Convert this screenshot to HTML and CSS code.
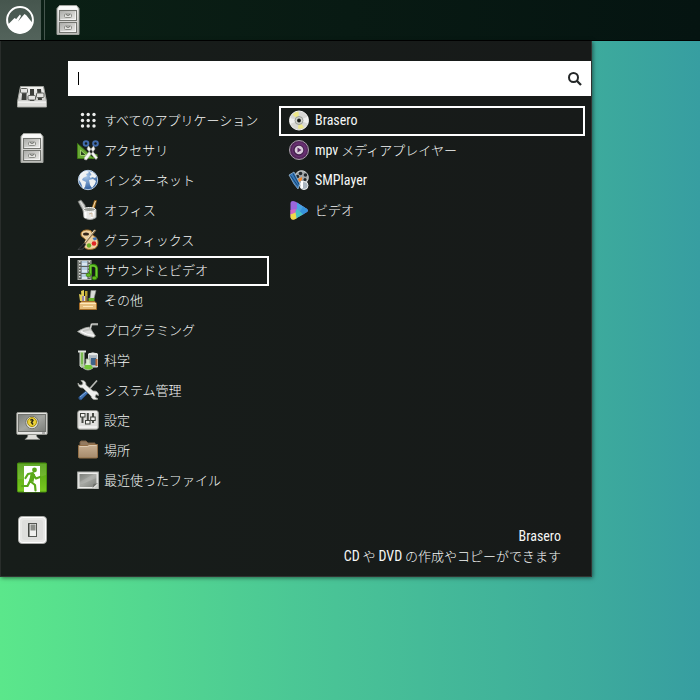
FILE: index.html
```html
<!DOCTYPE html>
<html lang="ja">
<head>
<meta charset="utf-8">
<meta name="viewport" content="width=device-width, initial-scale=1">
<title>メニュー</title>
<link rel="stylesheet" href="styles.css">
</head>
<body>
<svg class="defs" aria-hidden="true">
  <defs>
    <linearGradient id="metal" x1="0" y1="0" x2="0" y2="1"><stop offset="0" stop-color="#f6f6f4"/><stop offset="1" stop-color="#babbb7"/></linearGradient>
    <linearGradient id="drawer" x1="0" y1="0" x2="1" y2="1"><stop offset="0" stop-color="#a9aaa6"/><stop offset="1" stop-color="#eeeeec"/></linearGradient>
    <linearGradient id="green" x1="0" y1="0" x2="0" y2="1"><stop offset="0" stop-color="#4f9c12"/><stop offset="1" stop-color="#79c91f"/></linearGradient>
    <linearGradient id="folder" x1="0" y1="0" x2="0" y2="1"><stop offset="0" stop-color="#c9b092"/><stop offset="1" stop-color="#a58a6b"/></linearGradient>
    <linearGradient id="screen" x1="0" y1="0" x2="1" y2="1"><stop offset="0" stop-color="#7d807b"/><stop offset=".5" stop-color="#a4a6a1"/><stop offset="1" stop-color="#7b7e79"/></linearGradient>
    <radialGradient id="globe" cx=".4" cy=".3" r=".7"><stop offset="0" stop-color="#a9c8ea"/><stop offset="1" stop-color="#315f9e"/></radialGradient>
    <symbol id="cabinet" viewBox="0 0 32 32">
      <path d="M7.500 1.500h17l2.500 3v26H5v-26z" fill="url(#metal)" stroke="#a2a49f"/>
      <path d="M7.500 2.500h17l1.500 3H6z" fill="#fafaf9"/>
      <rect x="7.500" y="6.500" width="17" height="10" fill="url(#drawer)" stroke="#72746f"/>
      <rect x="7.500" y="18.500" width="17" height="10" fill="url(#drawer)" stroke="#72746f"/>
      <path d="M8.500 15.500h15v-8M8.500 27.500h15v-8" fill="none" stroke="#fff" opacity=".6"/>
      <rect x="12.500" y="10" width="7" height="3.500" rx="1" fill="#e4e4e1" stroke="#8c8e89"/><rect x="12.500" y="22" width="7" height="3.500" rx="1" fill="#e4e4e1" stroke="#8c8e89"/>
      <path d="M14 10.500q2 2 4 0M14 22.500q2 2 4 0" fill="none" stroke="#6a6c68"/>
    </symbol>
  </defs>
</svg>

<header class="panel">
  <button class="panel-menu" type="button" aria-label="メニュー">
    <svg class="icon-start" viewBox="0 0 32 32"><circle cx="16" cy="16" r="12.900" fill="none" stroke="#fff" stroke-width="2"/><path d="M4 20.500l6.500-6.500 1.700 1 3.800-4.500 1 1.500-3 5.500 6.500-7.500 1.800 1.200L28.500 19A13 13 0 0 1 4 22z" fill="#fff"/></svg>
  </button>
  <button class="panel-files" type="button" aria-label="ファイル"><svg class="icon-large"><use href="#cabinet"/></svg></button>
</header>

<main class="menu">
  <aside class="favorites">
    <button type="button" aria-label="システム設定"><svg class="icon-large" viewBox="0 0 32 32">
      <path d="M4.500 6.500h23l3 15v5.500h-29v-5.500z" fill="url(#metal)" stroke="#a2a49f"/><path d="M2 22h28v4.500H2z" fill="#dededb"/><path d="M2 22h28" stroke="#fff"/>
      <path d="M6.500 9h4v11h-5zM14 9h4v12h-4zM21 9h4l1 11h-4z" fill="#3c3e3a"/>
      <rect x="4.500" y="8.500" width="7" height="4.500" rx="1" fill="#e4e4e1" stroke="#5f615c"/><rect x="12" y="15.500" width="7.500" height="4.500" rx="1" fill="#e4e4e1" stroke="#5f615c"/><rect x="20.500" y="13" width="7.500" height="4.500" rx="1" fill="#e4e4e1" stroke="#5f615c"/>
      </svg></button>
    <button type="button" aria-label="ファイル"><svg class="icon-large"><use href="#cabinet"/></svg></button>
    <span class="spacer"></span>
    <button type="button" aria-label="画面をロック"><svg class="icon-large" viewBox="0 0 32 32">
      <path d="M12 24h8l1 3 3 2.500H9l2.500-2.500z" fill="#deded9" stroke="#888a85" stroke-width=".6"/>
      <rect x=".8" y="2.500" width="30.400" height="22" rx="1" fill="#e5e5e2" stroke="#93958f"/><rect x="2.500" y="4.500" width="27" height="17" fill="url(#screen)" stroke="#70726d"/>
      <circle cx="16" cy="12.500" r="6.300" fill="#d9dad5" stroke="#73756f"/><circle cx="16" cy="12" r="4.500" fill="#edd43a" stroke="#a68b08"/><path d="M14.500 10.500q1.500-2 2.500 0l-1.500 2 1.500 2" fill="none" stroke="#302b16" stroke-width="1.500"/><path d="M26 23h3" stroke="#777"/></svg></button>
    <button type="button" aria-label="ログアウト"><svg class="icon-large" viewBox="0 0 32 32">
      <rect x="1.500" y="1" width="29" height="29" rx="1" fill="url(#green)" stroke="#4b9211"/><path d="M8 4h16v26H8z" fill="#fff"/><path d="M2 2h28v11Q17 18 2 17z" fill="#fff" opacity=".1"/>
      <circle cx="18.500" cy="8" r="2.400" fill="#58a51a"/><path d="M17 11l-5 1-2.500 4M17 12.500l3 4 4-1.500M16 12l-2 7 5 4 .5 5.500M14 19l-2.500 5H6" fill="none" stroke="#5aa91a" stroke-width="2.200" stroke-linecap="round" stroke-linejoin="round"/><path d="M15 11l4 1-1.500 8-4-1z" fill="#5aa91a"/></svg></button>
    <button type="button" aria-label="シャットダウン"><svg class="icon-large" viewBox="0 0 32 32">
      <rect x="2.500" y="2.500" width="28" height="27" rx="3.500" fill="#e7e7e5" stroke="#a9aaa7"/><rect x="3.500" y="3.500" width="26" height="25" rx="3" fill="none" stroke="#fff"/><rect x="6" y="6" width="21" height="20" rx="2" fill="#dededc"/>
      <rect x="12.500" y="9.500" width="8" height="13" fill="#f0f0ee" stroke="#555753"/><path d="M14.500 10.500h5v6h-5z" fill="#8b8d88"/><path d="M13 10v12" stroke="#31332f"/></svg></button>
  </aside>

  <section class="content">
    <div class="search">
      <span class="caret"></span>
      <input type="text" aria-label="検索" autocomplete="off">
      <svg class="icon-search" viewBox="0 0 16 16"><circle cx="6.500" cy="6.500" r="4.500" fill="none" stroke="#232627" stroke-width="2"/><path d="M9.800 9.800L14 14" stroke="#232627" stroke-width="2.300"/></svg>
    </div>

    <div class="columns">
      <nav class="list categories" aria-label="カテゴリ">
        <button class="row" type="button"><svg viewBox="0 0 22 22"><g fill="#eceeed"><circle cx="5.500" cy="5.500" r="1.700"/><circle cx="11.200" cy="5.500" r="1.700"/><circle cx="17" cy="5.500" r="1.700"/><circle cx="5.500" cy="11.500" r="1.700"/><circle cx="11.200" cy="11.500" r="1.700"/><circle cx="17" cy="11.500" r="1.700"/><circle cx="5.500" cy="17" r="1.700"/><circle cx="11.200" cy="17" r="1.700"/><circle cx="17" cy="17" r="1.700"/></g></svg>すべてのアプリケーション</button>
        <button class="row" type="button"><svg viewBox="0 0 22 22"><path d="M.5 4.500L17 19.500H.5z" fill="#68a835" stroke="#3e7914"/><path d="M3.500 11v5.500h6z" fill="#28411d" stroke="#a1d06e"/><path d="M15 19.500h5.500v-4l-3-1z" fill="#5a9a2b"/><circle cx="9" cy="4.500" r="2.300" fill="none" stroke="#426cad" stroke-width="2"/><circle cx="18.500" cy="4.500" r="2.300" fill="none" stroke="#426cad" stroke-width="2"/><path d="M11.500 7L20.500 18.500l-1.500 2L10 10zM16.500 7L7.500 18.500v2l2 .5 8.500-11z" fill="#f5f5f4" stroke="#b5b8b2" stroke-width=".6"/></svg>アクセサリ</button>
        <button class="row" type="button"><svg viewBox="0 0 22 22"><circle cx="11" cy="11" r="9.700" fill="url(#globe)" stroke="#b9cee4"/><path d="M2.500 7Q5 2 10 2l2 2-3 1 1 2-4 2-1 2 4 2-1 5-2 2-2-6-2-3zM13 3q5 0 6.500 5l-2 1-2-1-2 1-1-2 2-1zM12 11l4-1 3 2-1 3-3 4-2-3z" fill="#eef1f2"/><path d="M3 6Q9 0 16 4" stroke="#fff" fill="none" opacity=".6"/></svg>インターネット</button>
        <button class="row" type="button"><svg viewBox="0 0 22 22"><path d="M1 2.500l3-1.500L8 6l1 6-2 1-3-5z" fill="#bfc1bd" stroke="#6d706b" stroke-width=".7"/><path d="M17.500 1.500h2L17 11l-3 1z" fill="#d59a3c" stroke="#8d5b12" stroke-width=".7"/><path d="M3.500 2.500l5 9M14.500 12l4-10" stroke="#fff" opacity=".6"/><path d="M6 10.500h13v8q-6 4-12 0z" fill="#e9e9e7" stroke="#a4a6a2"/><ellipse cx="12.500" cy="10.500" rx="6" ry="2" fill="#999c95" stroke="#f5f5f4"/><path d="M8.500 13v6M16.500 13l-2 6" stroke="#fff" stroke-width="2"/><path d="M12 15l3-1v4" fill="none" stroke="#ceb89e"/></svg>オフィス</button>
        <button class="row" type="button"><svg viewBox="0 0 22 22"><path d="M4 5C4 1 11 0 14 2c2 2 0 4 3 5 6 3 5 12-1 13-5 1-9 0-9-4 0-3 3-4 1-6C6 8 4 8 4 5z" fill="#efd1a0" stroke="#ad762c"/><ellipse cx="9" cy="5" rx="3" ry="1.600" fill="#33251b"/><circle cx="12" cy="16.500" r="2.200" fill="#65ad25"/><circle cx="17" cy="14.500" r="2.300" fill="#df2626"/><path d="M15.500 9l3.500-1 1 2.500-3 1z" fill="#4375b8"/><path d="M18.500 .8L8 14" stroke="#8e7550" stroke-width="2"/><path d="M17.500 1L8 13" stroke="#f0e3c7"/><path d="M7 14l2 1-3 5-5 .5 4-4z" fill="#17191a" stroke="#595c5e" stroke-width=".6"/></svg>グラフィックス</button>
        <button class="row selected" type="button" aria-pressed="true"><svg viewBox="0 0 22 22"><rect x="1" y="1.500" width="13" height="19" fill="#5b5e59" stroke="#a8aaa5"/><path d="M2.800 2v18M12.200 2v18" stroke="#e1e2df" stroke-width="1.500" stroke-dasharray="1.500 1.500"/><path d="M4.500 2h6v5h-6zM4.500 8h6v6h-6zM4.500 15h6v5h-6z" fill="#b7cde1"/><path d="M5 5h5M5 12h5M5 19h5" stroke="#fff"/><path d="M13.500 16V7q5-2 6 2v10" fill="none" stroke="#348c0b" stroke-width="3"/><path d="M13.500 16V7q5-1 6 2v9" fill="none" stroke="#71c832" stroke-width="1.500"/><ellipse cx="11.500" cy="16" rx="2.500" ry="1.700" fill="#62b91d" stroke="#32800b" stroke-width=".7"/><ellipse cx="17.500" cy="19" rx="2.500" ry="1.700" fill="#62b91d" stroke="#32800b" stroke-width=".7"/></svg>サウンドとビデオ</button>
        <button class="row" type="button"><svg viewBox="0 0 22 22"><path d="M4 2l3-1v11H5zM2 5l3 1v6H3z" fill="#e4cf58"/><path d="M5 7h3v6H5z" fill="#ddd6e5"/><path d="M8 2h2.500v10H8z" fill="#bca330"/><path d="M14 1.500h5l-2 8h-4z" fill="#d9dcd8" stroke="#8b8e89" stroke-width=".6"/><path d="M11.500 9h6v3.500h-6z" fill="#69b52a"/><path d="M6 7v6M10 7v6" stroke="#50365f"/><path d="M2.500 14l2-1.500h13l2 1.500v6.500h-17z" fill="#e6bd7b" stroke="#a66d27"/><path d="M3 14.500h16M6 17.500h10" stroke="#ffe7b8"/></svg>その他</button>
        <button class="row" type="button"><svg viewBox="0 0 22 22"><path d="M.5 12.500q7-4.500 12-4.500l6 9-2 1.500Q7 17.500.5 12.500z" fill="#dfe0de" stroke="#9b9e98" stroke-width=".7"/><path d="M13 11L14.500 5.500H21" fill="none" stroke="#7f827d" stroke-width="2"/><path d="M13 11L14.500 5H21" fill="none" stroke="#e2e2e0"/><path d="M4 12.500q7 4 13 4" stroke="#fff" fill="none"/><path d="M6 12l8-2" stroke="#c3c5c1" stroke-width="2"/></svg>プログラミング</button>
        <button class="row" type="button"><svg viewBox="0 0 22 22"><path d="M1 2.500h8" stroke="#dfe3de" stroke-width="2"/><path d="M3 3v14q2 3 4 0V3" fill="#a5ce87" stroke="#cfd3ce"/><path d="M4 4h2v11H4z" fill="#79b950"/><path d="M11.500 5q4-2 9 0v13h-9z" fill="#aeb7be" stroke="#e0e1df"/><ellipse cx="16" cy="5" rx="4.500" ry="1.300" fill="#e6e8e6"/><path d="M14 9h5v7h-5z" fill="#3e6288"/><path d="M19.500 10v7" stroke="#b56634" stroke-width="2"/><path d="M9 10h4v4l3 5q-5 4-10 0l3-5z" fill="#dcecd1" stroke="#9fa59a" stroke-width=".8"/><path d="M8 16h6l2 3q-5 3-9 0z" fill="#74c639"/></svg>科学</button>
        <button class="row" type="button"><svg viewBox="0 0 22 22"><path d="M20 1.500L9 14" stroke="#b8bab6" stroke-width="1.700"/><path d="M9 12l2 2-7 7q-3-1-2-3z" fill="#3f70af" stroke="#284c7c"/><path d="M3 18l6-5" stroke="#83afe2"/><path d="M4 1.500L6 4 5 6 2.500 6 1 4q0 5 5 5l8 8q1 5 7 3l-3-2 1-2.500 2.500 1q0-5-5.500-4.500L9 6q0-5-5-4.500z" fill="#eeefed" stroke="#a3a6a0" stroke-width=".8"/></svg>システム管理</button>
        <button class="row" type="button"><svg viewBox="0 0 22 22"><rect x=".7" y="1.700" width="20.600" height="18.600" rx="2" fill="#e0e0de" stroke="#9a9c97"/><path d="M2 3h18M2 18h18" stroke="#fff"/><path d="M5.500 4v10M10.800 4v10M16 4v10" stroke="#464944" stroke-width="2"/><rect x="3.500" y="4.500" width="4.500" height="3.500" fill="#f3f3f1" stroke="#3d403b"/><rect x="8.500" y="11.500" width="4.500" height="3.500" fill="#f3f3f1" stroke="#3d403b"/><rect x="13.700" y="8" width="4.500" height="3.500" fill="#f3f3f1" stroke="#3d403b"/></svg>設定</button>
        <button class="row" type="button"><svg viewBox="0 0 22 22"><path d="M3 9V3l1-1h5l2 2h7v5z" fill="#947b60" stroke="#7b6045"/><path d="M1.500 6.500h9l2-1h8v13l-1 .5H2.500l-1-.5z" fill="url(#folder)" stroke="#957047"/><path d="M2.500 7.500h8l2-1h7" fill="none" stroke="#decbb3"/></svg>場所</button>
        <button class="row" type="button"><svg viewBox="0 0 22 22"><rect x=".7" y="3" width="20.600" height="16.500" fill="#ededeb" stroke="#b0b2ae"/><path d="M2.500 5h17v9l-4 4h-13z" fill="url(#screen)"/><path d="M2.500 13l14-8h3v4l-17 7z" fill="#fff" opacity=".13"/><path d="M15.500 19l1-4 4.500-1z" fill="#6b6e69"/><path d="M21 15l-4.500 4.500h4.500z" fill="#c9cbc7"/></svg>最近使ったファイル</button>
      </nav>

      <div class="list applications">
        <button class="row selected" type="button"><svg viewBox="0 0 22 22"><circle cx="11" cy="11.500" r="9.500" fill="#d8d8d5" stroke="#f2f2f1"/><path d="M11 11.500L4.500 5.500q3-3 6-3zM11 11.500l5 7q-3 2-6 1z" fill="#eee78a"/><path d="M11 11.500L2 9v6zM11 11.500l9-4v7z" fill="#fff" opacity=".6"/><circle cx="11" cy="11.500" r="4" fill="#d0d2cd" stroke="#9c9f99"/><circle cx="11" cy="11.500" r="1.900" fill="#171a18"/></svg><span class="latin">Brasero</span></button>
        <button class="row" type="button"><svg viewBox="0 0 22 22"><circle cx="11" cy="11" r="9.500" fill="#54275b" stroke="#aaa1ac"/><circle cx="11.300" cy="10.700" r="7.500" fill="#672f70"/><circle cx="10.800" cy="11.200" r="5.500" fill="#40214a"/><circle cx="11" cy="11" r="4.300" fill="#dacddc"/><path d="M9.500 8.500l4 2.500-4 2.500z" fill="#602e69"/></svg><span class="latin">mpv</span> メディアプレイヤー</button>
        <button class="row" type="button"><svg viewBox="0 0 22 22"><circle cx="13.500" cy="8.500" r="6.800" fill="#a3a8aa" stroke="#d5d8d9"/><g fill="#20272b"><circle cx="12.500" cy="4.500" r="1.800"/><circle cx="17.500" cy="6" r="1.800"/><circle cx="9.500" cy="7.500" r="1.700"/><circle cx="17" cy="10.500" r="1.500"/></g><path d="M1 6l5-3 6 12-2 5-4-5z" fill="#3578bb" stroke="#a4bfd6" stroke-width=".7"/><path d="M2.500 6.500l7 10M5 4.500l6 11" stroke="#17456f"/><path d="M10 10l4-2v3l-3 2z" fill="#ef8730"/><circle cx="16" cy="16.500" r="4" fill="#a8b4be" stroke="#eceeee"/><path d="M14 12v7" stroke="#fff" stroke-width="2"/></svg><span class="latin">SMPlayer</span></button>
        <button class="row" type="button"><svg viewBox="0 0 22 22"><path d="M2.500 4q0-2 2.500-2 2 0 4 1.500l10 6.500q2 1.500 0 3l-12 7q-4 1.500-4.500-2z" fill="#9b66dc"/><path d="M9 3.500l10 6.500-4 5.500-6-6z" fill="#4ba4e2"/><path d="M15 7.500l4 2.500q2 1.500 0 3l-4 2.500-3-3z" fill="#3694dc"/><path d="M9 9.500l6 6-7 4-2-5z" fill="#45c3c4"/><path d="M2.500 15l5-2 1 6.500-2 1q-3.500 1-4-2z" fill="#efd94b"/><path d="M2.500 11l5-1v3.500l-5 2z" fill="#d566c4"/></svg>ビデオ</button>
      </div>
    </div>

    <footer class="details">
      <div class="latin">Brasero</div>
      <div><span class="latin">CD</span> や <span class="latin">DVD</span> の作成やコピーができます</div>
    </footer>
  </section>
</main>
</body>
</html>
```
FILE: styles.css
```css
* {
  box-sizing: border-box;
}

body {
  margin: 0;
  min-height: 100vh;
  background: linear-gradient(90deg, #5be78b 0%, #4bc795 42%, #3dab9c 84%, #379ea1 100%);
  color: #f5f7f6;
  font: 300 13px/18px "Noto Sans CJK JP", sans-serif;
}

button {
  padding: 0;
  border: 0;
  background: none;
  color: inherit;
  font: inherit;
}

svg {
  display: block;
  flex: none;
}

.defs {
  position: absolute;
  width: 0;
  height: 0;
}

.latin {
  font-family: "Roboto Condensed", "Noto Sans", sans-serif;
  font-size: 14px;
  font-weight: 400;
}

.panel {
  display: flex;
  height: 41px;
  border-bottom: 1px solid #000;
  background: linear-gradient(90deg, #0b2015, #051411);
}

.panel-menu {
  display: grid;
  place-items: center;
  width: 41px;
  margin-right: 3px;
  padding-right: 1px;
  background: linear-gradient(#46564e, #53635b);
}

.panel-files {
  padding: 0 7px;
  border-left: 1px solid #46564e;
}

.icon-large,
.icon-start {
  width: 32px;
  height: 32px;
}

.menu {
  display: flex;
  width: calc(100% - 108px);
  border: solid #303432;
  border-width: 0 1px 1px 0;
  background: linear-gradient(90deg, #171d1a, #171a19);
  box-shadow: 1px 1px 4px rgba(0, 0, 0, 0.5);
}

.favorites {
  display: flex;
  flex: none;
  flex-direction: column;
  width: 68px;
  padding: 29px 6px 20px 0;
  border-left: 1px solid #292d2b;
}

.favorites button {
  display: grid;
  place-items: center;
  height: 52px;
}

.spacer {
  flex: 1;
}

.content {
  flex: 1;
  min-width: 0;
  padding: 20px 0 10px;
}

.search {
  display: flex;
  align-items: center;
  height: 35px;
  padding: 0 8px 0 10px;
  background: #fff;
}

.caret {
  width: 1px;
  height: 13px;
  background: #000;
}

.search input {
  flex: 1;
  min-width: 0;
  border: 0;
  outline: 0;
  background: none;
  color: #000;
  font: inherit;
}

.icon-search {
  width: 16px;
  height: 16px;
}

.columns {
  display: flex;
  gap: 10px;
  padding: 10px 6px 0 0;
}

.list {
  display: flex;
  flex-direction: column;
}

.categories {
  flex: none;
  width: 201px;
}

.applications {
  flex: 1;
  min-width: 0;
}

.row {
  display: flex;
  align-items: center;
  height: 30px;
  padding: 0 7px 2px;
  border: 2px solid transparent;
  text-align: left;
  white-space: pre;
}

.row.selected {
  border-color: #fff;
}

.row svg {
  width: 22px;
  height: 22px;
  margin-right: 5px;
}

.details {
  padding: 31px 30px 0 0;
  line-height: 19px;
  text-align: right;
}
```
